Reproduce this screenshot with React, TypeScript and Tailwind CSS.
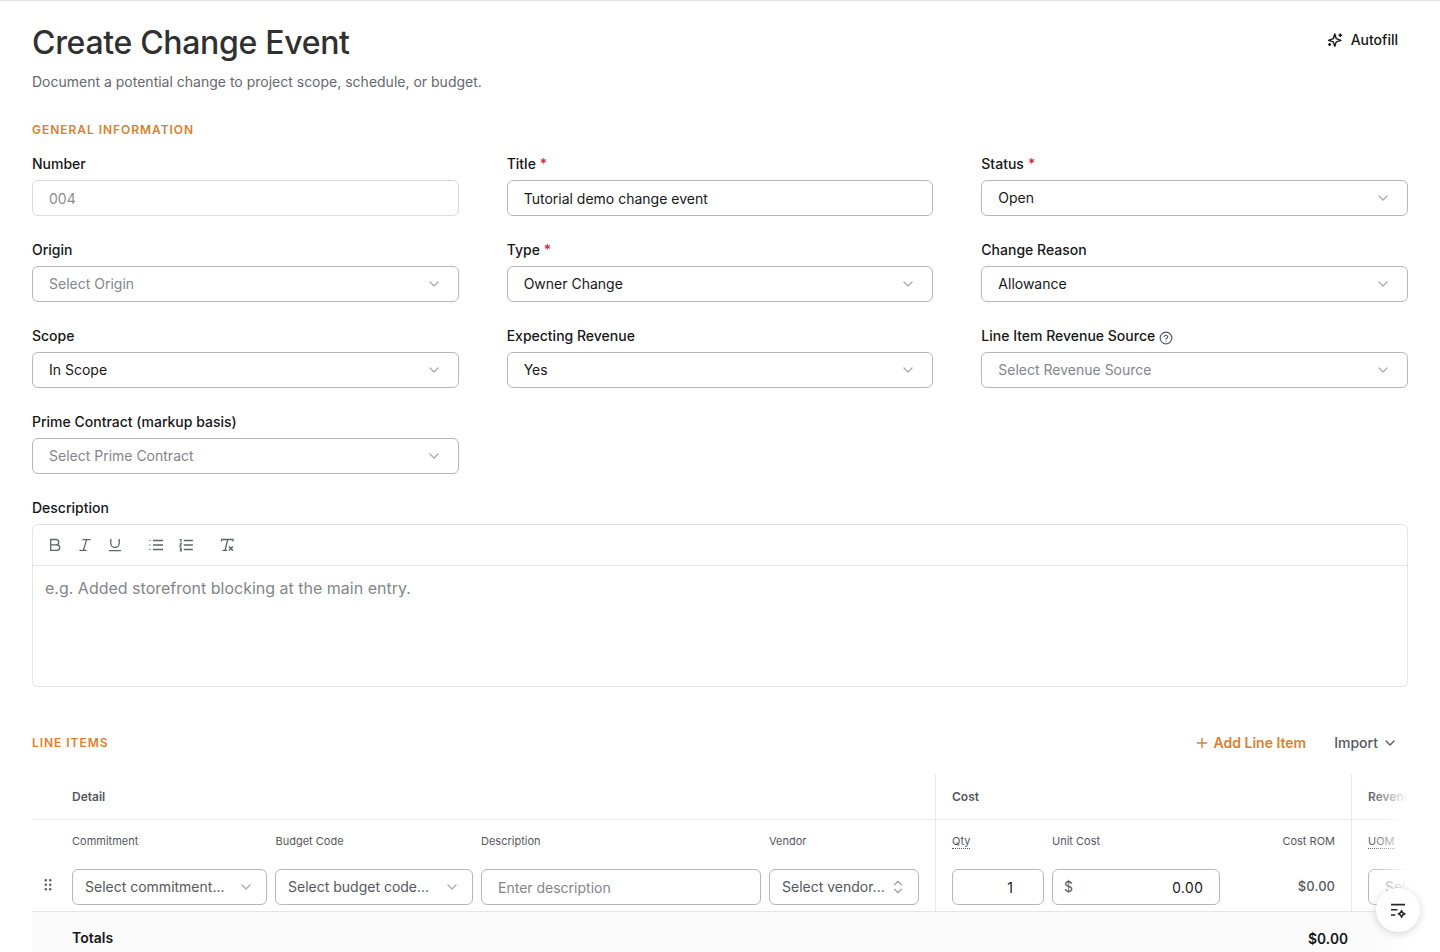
import type { ReactNode } from 'react';
import { ChevronDown, Plus } from 'lucide-react';

interface FieldProps {
    label: string;
    required?: boolean;
    help?: boolean;
    children: ReactNode;
}

const Field = ({ label, required, help, children }: FieldProps) => (
    <div>
        <div className="mb-2 flex h-4 items-center text-sm font-medium text-[#171717]">
            <span>{label}</span>
            {required && <span className="ml-1 text-[#dc2638]">*</span>}
            {help && (
                <svg className="ml-1 mt-1 size-3.5 text-[#55585d]" viewBox="0 0 24 24" fill="none" stroke="currentColor" strokeWidth="2" strokeLinecap="round" strokeLinejoin="round">
                    <circle cx="12" cy="12" r="10" />
                    <path d="M9.1 9.2a3 3 0 0 1 5.8.9c0 2-2.9 2.5-2.9 4.1M12 17.3h.01" />
                </svg>
            )}
        </div>
        {children}
    </div>
);

const SelectBox = ({ value, placeholder }: { value?: string; placeholder?: string }) => (
    <div className="flex h-9 items-center justify-between rounded-md border border-[#b5b6b8] px-4 text-sm">
        <span className={value ? 'text-[#171717]' : 'text-[#84868a]'}>{value || placeholder}</span>
        <ChevronDown className="size-4 text-[#aaacae]" strokeWidth={2} />
    </div>
);

const TableSelect = ({ text }: { text: string }) => (
    <div className="flex h-9 items-center justify-between rounded-md border border-[#b5b6b8] px-3 text-sm text-[#55585d]">
        <span className="whitespace-nowrap">{text}</span>
        <ChevronDown className="size-4 text-[#aaacae]" strokeWidth={2} />
    </div>
);

const EditorToolbar = () => (
    <div className="box-content flex h-10 items-center border-b border-[#e3e4e6] pl-[15px] text-[#606367]">
        {/* Bold */}
        <svg className="size-3.5" viewBox="0 0 14 14" fill="none" stroke="currentColor" strokeWidth="1.3" strokeLinejoin="round">
            <path d="M2.7 1.5h5.4a2.6 2.6 0 0 1 0 5.3H2.7zM2.7 6.8h6.2a2.8 2.8 0 0 1 0 5.6H2.7z" />
        </svg>
        {/* Italic */}
        <svg className="ml-4 size-3.5" viewBox="0 0 14 14" fill="none" stroke="currentColor" strokeWidth="1.3">
            <path d="M4.5 1.6h8M1.5 12.4h7M8.6 1.6 5.4 12.4" />
        </svg>
        {/* Underline */}
        <svg className="ml-4 size-3.5" viewBox="0 0 14 14" fill="none" stroke="currentColor" strokeWidth="1.3">
            <path d="M2.8 1v4.2a4.2 4.2 0 0 0 8.4 0V1M1 12.6h12" />
        </svg>
        {/* Bullet list */}
        <svg className="ml-[27px] size-3.5" viewBox="0 0 14 14" fill="none" stroke="currentColor" strokeWidth="1.5">
            <path d="M4 2.5h10M4 7h10M4 11.5h10" />
            <path strokeWidth="1.2" d="M.2 2.5h1.3M.2 7h1.3M.2 11.5h1.3" />
        </svg>
        {/* Numbered list */}
        <svg className="ml-4 size-3.5" viewBox="0 0 14 14" fill="none" stroke="currentColor" strokeWidth="1.5">
            <path d="M4.8 2.5h9M4.8 7h9M4.8 11.5h9" />
            <path strokeWidth="1.2" d="M.8 1.6h1.2v2.8M.7 5.8h1.5L.9 8.2h1.5M.7 10.2h1.5v2.6H.7M1 11.5h1.2" />
        </svg>
        {/* Clear formatting */}
        <svg className="ml-[27px] size-3.5" viewBox="0 0 14 14" fill="none" stroke="currentColor" strokeWidth="1.3">
            <path d="M1.5 3.6V1.5H13v2.1M7.8 1.5 5 12.4M2.5 12.4h4.7" />
            <path strokeWidth="1.5" d="m8.9 8.5 4 4M12.9 8.5l-4 4" />
        </svg>
    </div>
);

const DragHandle = () => (
    <svg className="h-3.5 w-2" viewBox="0 0 8 14" fill="#55585d">
        {[2.2, 6.7, 11.2].map((y) => (
            <g key={y}>
                <circle cx="1.8" cy={y} r="1.2" />
                <circle cx="6.2" cy={y} r="1.2" />
            </g>
        ))}
    </svg>
);

const LineItemsTable = () => (
    <div className="relative mt-[13px] overflow-hidden">
        <div className="w-[1600px] text-[#55585d]">
            {/* Group headings */}
            <div className="flex h-[46px] border-b border-[#e8e9ea] text-xs font-semibold">
                <div className="flex w-[904px] items-center border-r border-[#e8e9ea] pl-10">Detail</div>
                <div className="flex w-[416px] items-center border-r border-[#e8e9ea] pl-4">Cost</div>
                <div className="flex items-center pl-4">Revenue</div>
            </div>
            <div className="flex h-[92px] border-b border-[#e3e4e6]">
                <div className="flex w-[904px] gap-2 border-r border-[#e8e9ea]">
                    <div className="w-8 pl-3 pt-[58px]">
                        <DragHandle />
                    </div>
                    <div className="w-[195px]">
                        <div className="flex h-[43px] items-center text-[11px]">Commitment</div>
                        <div className="pt-1.5"><TableSelect text="Select commitment..." /></div>
                    </div>
                    <div className="w-[198px]">
                        <div className="flex h-[43px] items-center pl-[0.5px] text-[11px]">Budget Code</div>
                        <div className="pt-1.5"><TableSelect text="Select budget code..." /></div>
                    </div>
                    <div className="w-[280px]">
                        <div className="flex h-[43px] items-center text-[11px]">Description</div>
                        <div className="mt-1.5 flex h-9 items-center rounded-md border border-[#b5b6b8] px-4 pt-0.5 text-sm text-[#84868a]">
                            Enter description
                        </div>
                    </div>
                    <div className="w-[150px]">
                        <div className="flex h-[43px] items-center text-[11px]">Vendor</div>
                        <div className="mt-1.5 flex h-9 items-center justify-between rounded-md border border-[#b5b6b8] px-3 text-sm">
                            <span className="whitespace-nowrap">Select vendor...</span>
                            <svg className="size-4 text-[#a3a5a8]" viewBox="0 0 16 16" fill="none" stroke="currentColor" strokeWidth="1.3" strokeLinecap="round" strokeLinejoin="round">
                                <path d="m4.5 5.8 3.5-3.5 3.5 3.5M4.5 10.2 8 13.700l3.5-3.5" />
                            </svg>
                        </div>
                    </div>
                </div>
                <div className="flex w-[416px] gap-2 border-r border-[#e8e9ea] px-4">
                    <div className="w-[92px]">
                        <div className="flex h-[43px] items-center text-[11px]">
                            <span className="border-b border-dotted border-[#55585d] leading-[14px]">Qty</span>
                        </div>
                        <div className="mt-1.5 flex h-9 items-center justify-end rounded-md border border-[#b5b6b8] pr-[30px] pt-0.5 text-sm text-[#171717]">
                            1
                        </div>
                    </div>
                    <div className="w-[168px]">
                        <div className="flex h-[43px] items-center text-[11px]">Unit Cost</div>
                        <div className="mt-1.5 flex h-9 items-center justify-between rounded-md border border-[#b5b6b8] pl-[11px] pr-4 text-sm">
                            <span>$</span>
                            <span className="pt-0.5 tabular-nums text-[#171717]">0.00</span>
                        </div>
                    </div>
                    <div className="flex-1 text-right">
                        <div className="flex h-[43px] items-center justify-end text-[11px]">Cost ROM</div>
                        <div className="pt-[13px] text-[13px] font-medium leading-[21px] tabular-nums">$0.00</div>
                    </div>
                </div>
                <div className="w-[160px] pl-4">
                    <div className="flex h-[43px] items-center text-[11px]">
                        <span className="border-b border-dotted border-[#55585d] leading-[14px]">UOM</span>
                    </div>
                    <div className="mt-1.5 flex h-9 items-center rounded-md border border-[#b5b6b8] px-4 text-sm text-[#84868a]">
                        Select
                    </div>
                </div>
            </div>
            <div className="flex h-[54px] bg-[#fafafa] text-sm font-semibold text-[#171717]">
                <div className="w-[904px] pl-10 pt-4">Totals</div>
                <div className="w-[412px] pt-[17px] text-right tabular-nums">$0.00</div>
            </div>
        </div>
        <div className="absolute inset-y-0 right-0 w-10 bg-gradient-to-r from-transparent to-white" />
    </div>
);

export default function App() {
    return (
        <div className="relative h-[952px] overflow-hidden bg-white font-['Inter',sans-serif] text-[#171717]">
            <div className="h-px bg-[#e5e5e6] shadow-xs" />
            <main className="px-8 pt-[21px]">
                <header className="flex justify-between">
                    <div>
                        <h1 className="pt-px text-[32px] font-medium leading-10 tracking-[-0.32px] text-[#303030]">Create Change Event</h1>
                        <p className="mt-[9px] text-sm text-[#66696d]">
                            Document a potential change to project scope, schedule, or budget.
                        </p>
                    </div>
                    <button className="mr-2.5 flex h-9 items-center gap-2 text-sm font-medium">
                        <svg className="size-4" viewBox="0 0 16 16" fill="none" stroke="currentColor" strokeWidth="1.4" strokeLinejoin="round">
                            <path d="M7.8 2 9.3 6.7l4.7 1.6-4.7 1.5-1.5 4.6-1.5-4.6L1.5 8.3l4.8-1.600z" />
                            <path d="M13.3 1.500v3.600M11.500 3.300h3.600M2.600 11.100v2.800M1.200 12.500H4" />
                        </svg>
                        Autofill
                    </button>
                </header>

                <h2 className="mt-[30px] text-xs font-semibold leading-4 tracking-[0.96px] text-[#dc7f2e]">GENERAL INFORMATION</h2>
                <div className="mt-[18px] grid grid-cols-3 gap-x-12 gap-y-[26px]">
                    <Field label="Number">
                        <div className="flex h-9 items-center rounded-md border border-[#dadbdc] px-4 pt-0.5 text-sm text-[#8b8b8b]">004</div>
                    </Field>
                    <Field label="Title" required>
                        <div className="flex h-9 items-center rounded-md border border-[#b5b6b8] px-4 pt-0.5 text-sm">
                            Tutorial demo change event
                        </div>
                    </Field>
                    <Field label="Status" required><SelectBox value="Open" /></Field>
                    <Field label="Origin"><SelectBox placeholder="Select Origin" /></Field>
                    <Field label="Type" required><SelectBox value="Owner Change" /></Field>
                    <Field label="Change Reason"><SelectBox value="Allowance" /></Field>
                    <Field label="Scope"><SelectBox value="In Scope" /></Field>
                    <Field label="Expecting Revenue"><SelectBox value="Yes" /></Field>
                    <Field label="Line Item Revenue Source" help><SelectBox placeholder="Select Revenue Source" /></Field>
                    <Field label="Prime Contract (markup basis)"><SelectBox placeholder="Select Prime Contract" /></Field>
                </div>

                <div className="mt-[26px]">
                    <Field label="Description">
                        <div className="h-[163px] rounded-md border border-[#e3e4e6]">
                            <EditorToolbar />
                            <p className="px-3 pt-2.5 text-base text-[#84868a]">e.g. Added storefront blocking at the main entry.</p>
                        </div>
                    </Field>
                </div>

                {/* Line items */}
                <div className="mt-[38px] flex h-9 items-center">
                    <h2 className="flex-1 text-xs font-semibold leading-4 tracking-[0.96px] text-[#dc7f2e]">LINE ITEMS</h2>
                    <button className="flex items-center gap-1 text-sm font-semibold text-[#dc7f2e]">
                        <Plus className="size-4" strokeWidth={2} />
                        Add Line Item
                    </button>
                    <button className="ml-7 mr-2.5 flex items-center gap-1 text-sm font-medium text-[#55585d]">
                        Import
                        <ChevronDown className="size-4" strokeWidth={2} />
                    </button>
                </div>
                <LineItemsTable />
            </main>

            {/* Floating assistant button */}
            <button className="absolute left-[1376px] top-[888px] flex size-11 items-center justify-center rounded-full bg-white shadow-[0_2px_8px_rgba(0,0,0,0.16)]">
                <svg className="size-4" viewBox="0 0 16 16" fill="none" stroke="#262626" strokeWidth="1.6">
                    <path d="M1 2.600h14M1 7.800h6.500M1 13h4.300" />
                    <path strokeLinejoin="round" d="m11.600 8.600 1.100 2.200 2.200 1.100-2.200 1.100-1.100 2.200-1.100-2.200-2.200-1.100 2.200-1.100z" />
                </svg>
            </button>
        </div>
    );
}
